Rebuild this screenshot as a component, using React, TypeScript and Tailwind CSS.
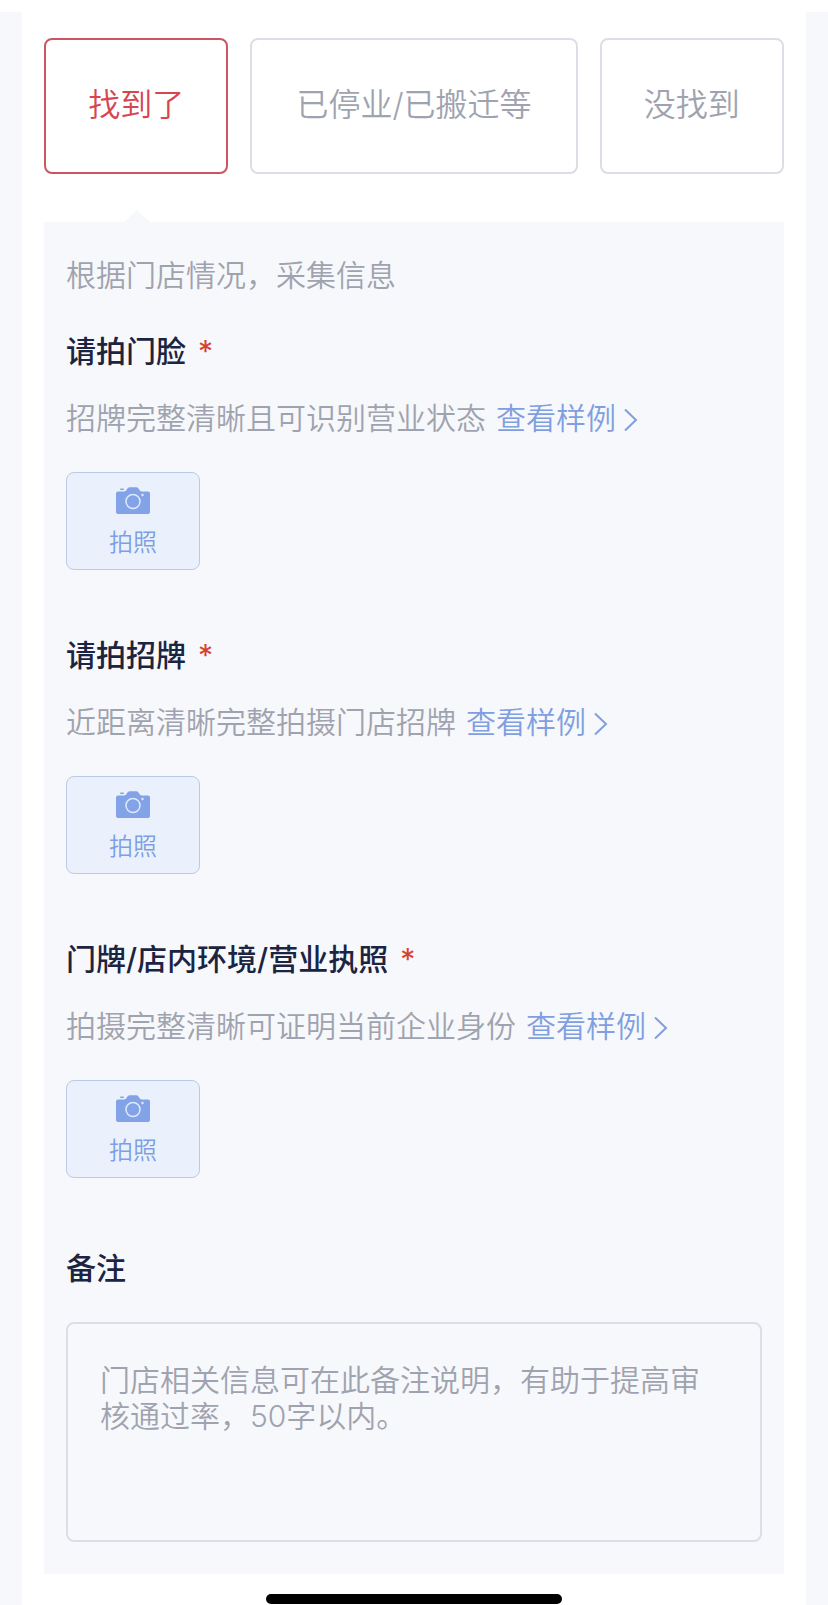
import { useState } from 'react'

const tabs = ['找到了', '已停业/已搬迁等', '没找到']

const photoItems = [
  { title: '请拍门脸', desc: '招牌完整清晰且可识别营业状态' },
  { title: '请拍招牌', desc: '近距离清晰完整拍摄门店招牌' },
  { title: '门牌/店内环境/营业执照', desc: '拍摄完整清晰可证明当前企业身份' },
]

function CameraIcon() {
  return (
    <svg width="34" height="27" viewBox="0 0 34 27" fill="none" aria-hidden="true">
      <path
        d="M2 4.500H8.500C10.500 4.500 11 0.500 13.500 0.300H20.500C23 0.500 23.500 4.500 25.500 4.500H32C33.200 4.500 34 5.300 34 6.500V25C34 26.200 33.200 27 32 27H2C0.800 27 0 26.200 0 25V6.500C0 5.300 0.800 4.500 2 4.500Z"
        fill="#82a3e8"
      />
      <rect x="4" y="1.500" width="4" height="1.500" rx="0.750" fill="#82a3e8" />
      <circle cx="17" cy="14.500" r="7" stroke="#dfe9fb" strokeWidth="1.500" />
      <circle cx="26.500" cy="8" r="1.200" fill="#dfe9fb" />
    </svg>
  )
}

function PhotoField({ title, desc }: { title: string; desc: string }) {
  return (
    <section className="mb-[65px]">
      <h2 className="text-[30px] leading-10 font-medium text-[#1b2440]">
        {title}
        <span className="ml-3 font-normal text-[#d9412f]">*</span>
      </h2>
      <p className="mt-[27px] flex items-center text-[30px] leading-10 text-[#9fa3af]">
        {desc}
        <a href="#" className="ml-2.5 flex items-center text-[#7f9fe0]">
          查看样例
          <svg width="14" height="24" viewBox="0 0 14 24" fill="none" className="ml-2 mt-1" aria-hidden="true">
            <path d="M1 1.500L12 12L1 22.500" stroke="currentColor" strokeWidth="2" />
          </svg>
        </a>
      </p>
      <button
        type="button"
        aria-label={`${title} 拍照`}
        className="mt-[34px] flex h-[98px] w-[134px] flex-col items-center rounded-lg border border-[#bccae9] bg-[#eaf1fc] pt-3.5 text-2xl leading-8 text-[#7f9fe0]"
      >
        <CameraIcon />
        <span className="mt-[13px]">拍照</span>
      </button>
    </section>
  )
}

export default function App() {
  const [active, setActive] = useState(0)
  const [remark, setRemark] = useState('')

  return (
    <div className="min-h-screen bg-[#f7f8fb] border-t-12 border-white px-[22px] font-[Inter,'Noto_Sans_CJK_SC',sans-serif] font-[350]">
      <main className="bg-white px-[22px] pt-[26px]">
        <div className="flex gap-[22px]">
          {tabs.map((tab, i) => (
            <button
              key={tab}
              type="button"
              onClick={() => setActive(i)}
              className={`h-[136px] flex-auto rounded-lg border-2 pb-0.5 text-[32px] whitespace-nowrap ${
                i === active ? 'border-[#cb5560] text-[#d64550]' : 'border-[#dcdee6] text-[#9fa3af]'
              } ${i === 1 ? 'px-[42px]' : 'px-10'}`}
            >
              {tab}
            </button>
          ))}
        </div>

        <div className="relative mt-12 bg-[#f7f8fb] px-[22px] pt-[33px] pb-8">
          <svg width="26" height="12" viewBox="0 0 26 12" className="absolute -top-3 left-20" aria-hidden="true">
            <path d="M0 12L13 0L26 12Z" fill="#f7f8fb" />
          </svg>
          <p className="mb-9 text-[30px] leading-10 text-[#9fa3af]">根据门店情况，采集信息</p>

          {photoItems.map((item) => (
            <PhotoField key={item.title} title={item.title} desc={item.desc} />
          ))}

          <label htmlFor="remark" className="mt-[70px] block text-[30px] leading-10 font-medium text-[#1b2440]">
            备注
          </label>
          <textarea
            id="remark"
            value={remark}
            maxLength={50}
            onChange={(e) => setRemark(e.target.value)}
            placeholder="门店相关信息可在此备注说明，有助于提高审核通过率，50字以内。"
            className="mt-[34px] block h-[220px] w-full resize-none rounded-lg border-2 border-[#dcdee6] bg-transparent px-8 py-[38px] text-[30px] leading-9 text-[#1b2440] outline-none placeholder:text-[#9fa3af]"
          />
        </div>

        <div className="flex h-[31px] items-end justify-center pb-px">
          <div className="h-2.5 w-[296px] rounded-full bg-black" />
        </div>
      </main>
    </div>
  )
}
